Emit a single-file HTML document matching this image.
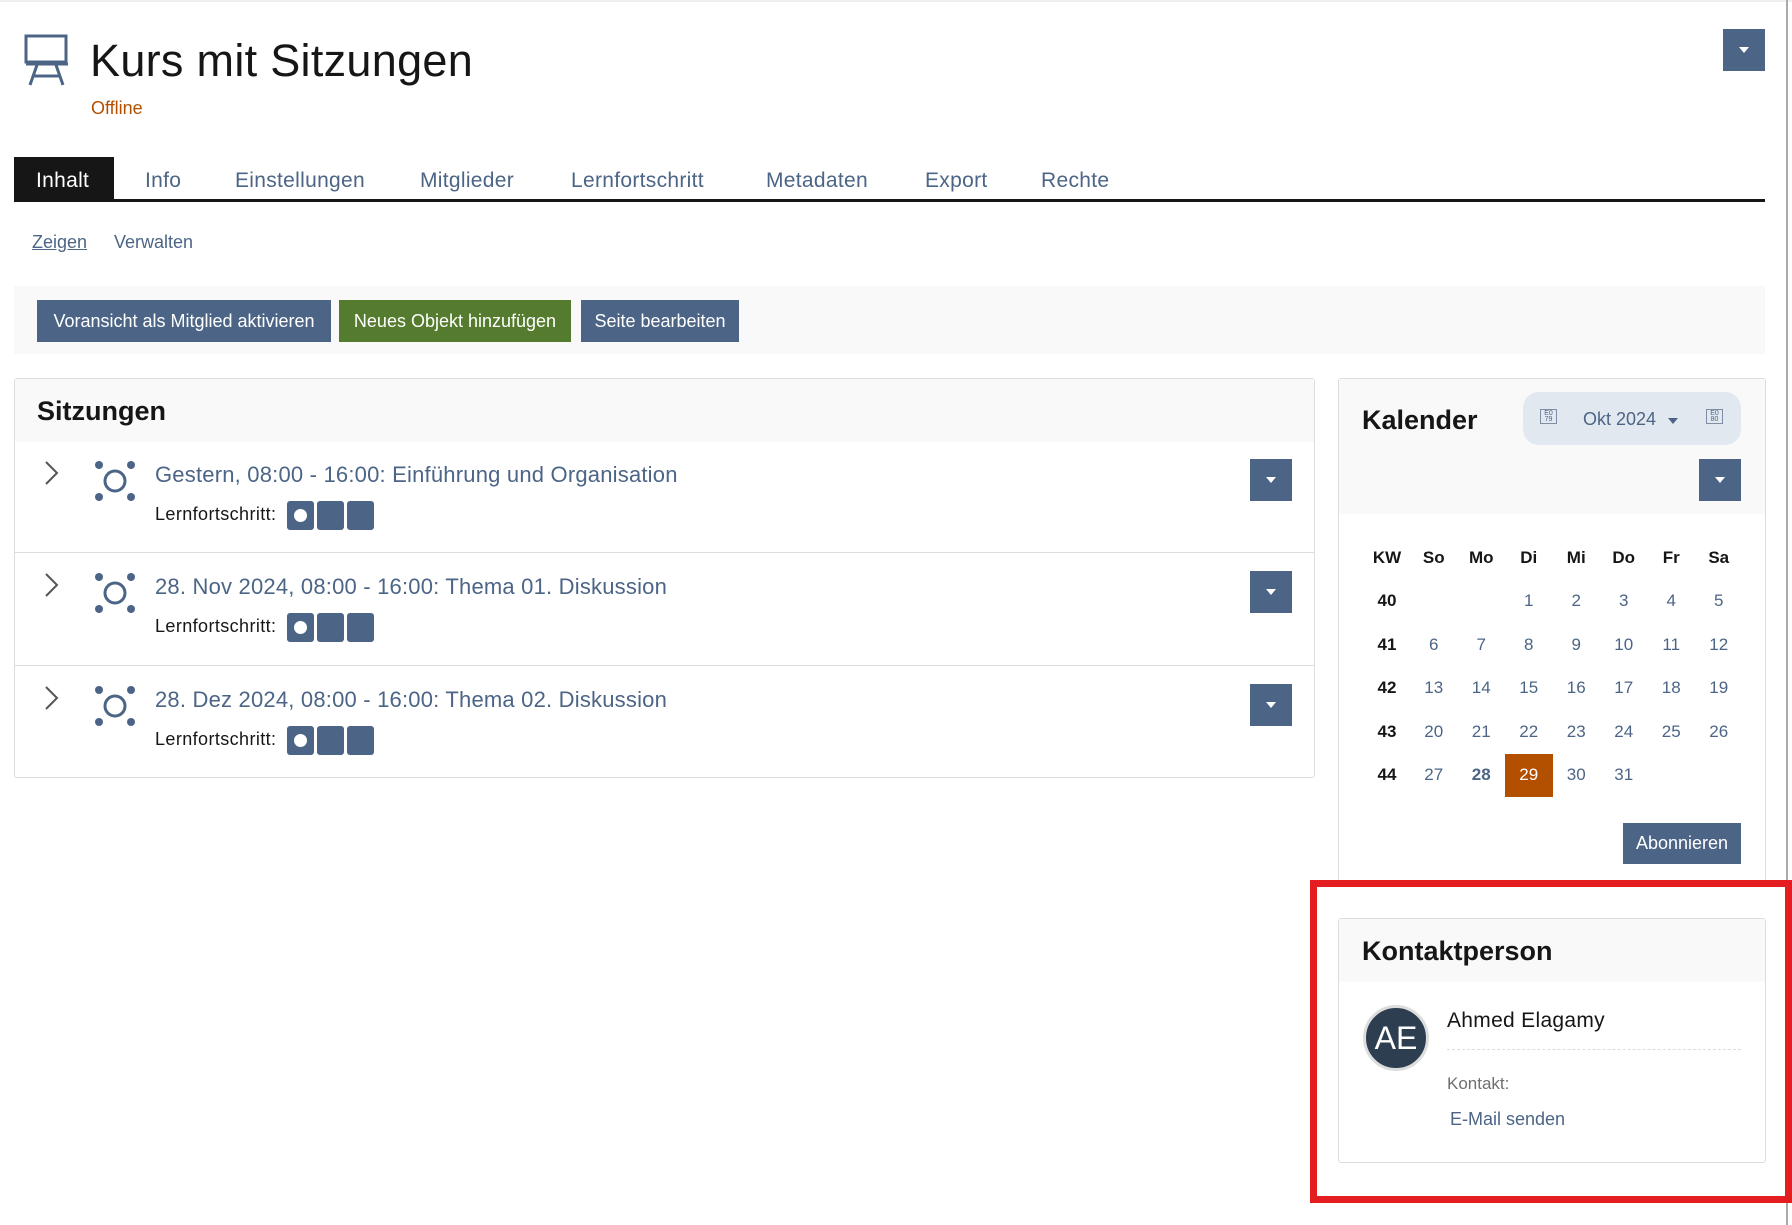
<!DOCTYPE html>
<html><head><meta charset="utf-8"><style>
*{box-sizing:border-box;margin:0;padding:0}
body{width:1792px;height:1225px;background:#fff;font-family:"Liberation Sans",sans-serif;position:relative;overflow:hidden;color:#161616}
.a{position:absolute}
.btn{position:absolute;background:#4c6586;color:#fff;font-size:18px;display:flex;align-items:center;justify-content:center}
.dd{position:absolute;width:42px;height:42px;background:#4c6586}
.dd:after{content:"";position:absolute;left:16px;top:18px;border-left:5px solid transparent;border-right:5px solid transparent;border-top:6px solid #fff}
.tab{position:absolute;top:169px;font-size:21px;color:#4c6586;letter-spacing:0.3px}
.row .t{position:absolute;left:155px;font-size:22px;color:#4c6586;letter-spacing:0.2px}
.lf{position:absolute;left:155px;font-size:18px;color:#161616;letter-spacing:0.4px}
.pb{position:absolute;left:287px;width:87px;height:29px;display:flex;gap:3px}
.pb div{background:#4c6586;flex:1;border-radius:3px;position:relative}
.pb div:first-child:after{content:"";position:absolute;left:7px;top:8px;width:13px;height:13px;border-radius:50%;background:#fff}
.cal{table-layout:fixed;width:378.5px;border-collapse:collapse}
.cal td,.cal th{width:47.5px;padding:0;text-align:center;font-size:17px;height:43.5px;color:#4c6586;font-weight:normal}
.cal th{color:#161616;font-weight:bold}
.cal td.k{color:#161616;font-weight:bold}
.bx{position:absolute;width:17px;height:15px;border:1px solid #7d8ea6;font-size:7px;color:#4c6586;line-height:6px;text-align:center;padding-top:1px}
</style></head><body>
<div class="a" style="left:0;top:0;width:1792px;height:2px;background:#eee"></div>
<div class="a" style="left:1786px;top:0;width:2px;height:1225px;background:#aaa"></div>
<svg class="a" style="left:24px;top:34px" width="46" height="52" viewBox="0 0 46 52" fill="none" stroke="#4c6586" stroke-width="3"><rect x="2" y="2" width="40" height="26"/><line x1="2" y1="30" x2="44" y2="30"/><path d="M13 31 L6 51 M32 31 L39 51 M10 42 H35"/></svg>
<div class="a" style="left:90px;top:35px;font-size:45px;color:#161616;letter-spacing:0.3px">Kurs mit Sitzungen</div>
<div class="a" style="left:91px;top:98px;font-size:18px;color:#b35000">Offline</div>
<div class="dd" style="left:1723px;top:29px"></div>
<div class="a" style="left:14px;top:157px;width:100px;height:43px;background:#161616"></div>
<div class="tab" style="left:36px;color:#fff">Inhalt</div>
<div class="tab" style="left:145px">Info</div>
<div class="tab" style="left:235px">Einstellungen</div>
<div class="tab" style="left:420px">Mitglieder</div>
<div class="tab" style="left:571px">Lernfortschritt</div>
<div class="tab" style="left:766px">Metadaten</div>
<div class="tab" style="left:925px">Export</div>
<div class="tab" style="left:1041px">Rechte</div>
<div class="a" style="left:14px;top:199px;width:1751px;height:3px;background:#161616"></div>
<div class="a" style="left:32px;top:232px;font-size:18px;color:#4c6586;text-decoration:underline">Zeigen</div>
<div class="a" style="left:114px;top:232px;font-size:18px;color:#4c6586">Verwalten</div>
<div class="a" style="left:14px;top:286px;width:1751px;height:68px;background:#f9f9f9"></div>
<div class="btn" style="left:37px;top:300px;width:294px;height:42px">Voransicht als Mitglied aktivieren</div>
<div class="btn" style="left:339px;top:300px;width:232px;height:42px;background:#557b2e">Neues Objekt hinzufügen</div>
<div class="btn" style="left:581px;top:300px;width:158px;height:42px">Seite bearbeiten</div>

<div class="a" style="left:14px;top:378px;width:1301px;height:400px;border:1px solid #ddd;border-radius:3px">
 <div style="height:63px;background:#f9f9f9"></div>
 <div class="a" style="left:22px;top:17px;font-size:27px;font-weight:bold;color:#161616">Sitzungen</div>
</div>
<div class="a" style="left:15px;top:552px;width:1299px;height:1px;background:#ddd"></div>
<div class="a" style="left:15px;top:665px;width:1299px;height:1px;background:#ddd"></div>

<div class="row">
<svg class="a" style="left:44px;top:460px" width="16" height="26" fill="none" stroke="#555" stroke-width="2"><path d="M2 2 L13 13 L2 24"/></svg>
<svg class="a" style="left:94px;top:460px" width="42" height="42"><g fill="#4c6586"><circle cx="5" cy="5" r="4"/><circle cx="37" cy="5" r="4"/><circle cx="5" cy="37" r="4"/><circle cx="37" cy="37" r="4"/></g><circle cx="21" cy="21" r="10" fill="none" stroke="#4c6586" stroke-width="3"/></svg>
<div class="t" style="top:462px">Gestern, 08:00 - 16:00: Einführung und Organisation</div>
<div class="lf" style="top:504px">Lernfortschritt:</div>
<div class="pb" style="top:501px"><div></div><div></div><div></div></div>
<div class="dd" style="left:1250px;top:459px"></div>
</div>
<div class="row">
<svg class="a" style="left:44px;top:572px" width="16" height="26" fill="none" stroke="#555" stroke-width="2"><path d="M2 2 L13 13 L2 24"/></svg>
<svg class="a" style="left:94px;top:572px" width="42" height="42"><g fill="#4c6586"><circle cx="5" cy="5" r="4"/><circle cx="37" cy="5" r="4"/><circle cx="5" cy="37" r="4"/><circle cx="37" cy="37" r="4"/></g><circle cx="21" cy="21" r="10" fill="none" stroke="#4c6586" stroke-width="3"/></svg>
<div class="t" style="top:574px">28. Nov 2024, 08:00 - 16:00: Thema 01. Diskussion</div>
<div class="lf" style="top:616px">Lernfortschritt:</div>
<div class="pb" style="top:613px"><div></div><div></div><div></div></div>
<div class="dd" style="left:1250px;top:571px"></div>
</div>
<div class="row">
<svg class="a" style="left:44px;top:685px" width="16" height="26" fill="none" stroke="#555" stroke-width="2"><path d="M2 2 L13 13 L2 24"/></svg>
<svg class="a" style="left:94px;top:685px" width="42" height="42"><g fill="#4c6586"><circle cx="5" cy="5" r="4"/><circle cx="37" cy="5" r="4"/><circle cx="5" cy="37" r="4"/><circle cx="37" cy="37" r="4"/></g><circle cx="21" cy="21" r="10" fill="none" stroke="#4c6586" stroke-width="3"/></svg>
<div class="t" style="top:687px">28. Dez 2024, 08:00 - 16:00: Thema 02. Diskussion</div>
<div class="lf" style="top:729px">Lernfortschritt:</div>
<div class="pb" style="top:726px"><div></div><div></div><div></div></div>
<div class="dd" style="left:1250px;top:684px"></div>
</div>

<div class="a" style="left:1338px;top:378px;width:428px;height:520px;border:1px solid #ddd;border-bottom:none;border-radius:3px 3px 0 0">
 <div style="height:135px;background:#f9f9f9"></div>
</div>
<div class="a" style="left:1362px;top:405px;font-size:27px;font-weight:bold;color:#161616">Kalender</div>
<div class="a" style="left:1523px;top:392px;width:218px;height:53px;background:#e2e8f0;border-radius:16px"></div>
<div class="bx" style="left:1540px;top:409px">E0<br>79</div>
<div class="bx" style="left:1706px;top:409px">E0<br>80</div>
<div class="a" style="left:1583px;top:409px;font-size:18px;color:#4c6586">Okt 2024</div>
<div class="a" style="left:1668px;top:418px;border-left:5px solid transparent;border-right:5px solid transparent;border-top:6px solid #4c6586"></div>
<div class="dd" style="left:1699px;top:459px"></div>
<table class="cal a" style="left:1364px;top:536px">
<colgroup><col style="width:46px"><col span="7" style="width:47.5px"></colgroup>
<tr><th>KW</th><th>So</th><th>Mo</th><th>Di</th><th>Mi</th><th>Do</th><th>Fr</th><th>Sa</th></tr>
<tr><td class="k">40</td><td></td><td></td><td>1</td><td>2</td><td>3</td><td>4</td><td>5</td></tr>
<tr><td class="k">41</td><td>6</td><td>7</td><td>8</td><td>9</td><td>10</td><td>11</td><td>12</td></tr>
<tr><td class="k">42</td><td>13</td><td>14</td><td>15</td><td>16</td><td>17</td><td>18</td><td>19</td></tr>
<tr><td class="k">43</td><td>20</td><td>21</td><td>22</td><td>23</td><td>24</td><td>25</td><td>26</td></tr>
<tr><td class="k">44</td><td>27</td><td style="font-weight:bold">28</td><td style="background:#b35000;color:#fff">29</td><td>30</td><td>31</td><td></td><td></td></tr>
</table>
<div class="btn" style="left:1623px;top:823px;width:118px;height:41px">Abonnieren</div>

<div class="a" style="left:1310px;top:880px;width:482px;height:323px;border:7px solid #e41e20;background:#fff"></div>
<div class="a" style="left:1338px;top:918px;width:428px;height:245px;border:1px solid #ddd;border-radius:3px">
 <div style="height:63px;background:#f9f9f9"></div>
</div>
<div class="a" style="left:1362px;top:936px;font-size:27px;font-weight:bold;color:#161616">Kontaktperson</div>
<div class="a" style="left:1363px;top:1005px;width:66px;height:66px;border-radius:50%;background:#2c3e50;border:3px solid #ddd;color:#fff;font-size:32px;display:flex;align-items:center;justify-content:center">AE</div>
<div class="a" style="left:1447px;top:1009px;font-size:21px;color:#161616;letter-spacing:0.3px">Ahmed Elagamy</div>
<div class="a" style="left:1447px;top:1049px;width:294px;border-top:1px dashed #ddd"></div>
<div class="a" style="left:1447px;top:1074px;font-size:17px;color:#6f6f6f">Kontakt:</div>
<div class="a" style="left:1450px;top:1109px;font-size:18px;color:#4c6586">E-Mail senden</div>
</body></html>
